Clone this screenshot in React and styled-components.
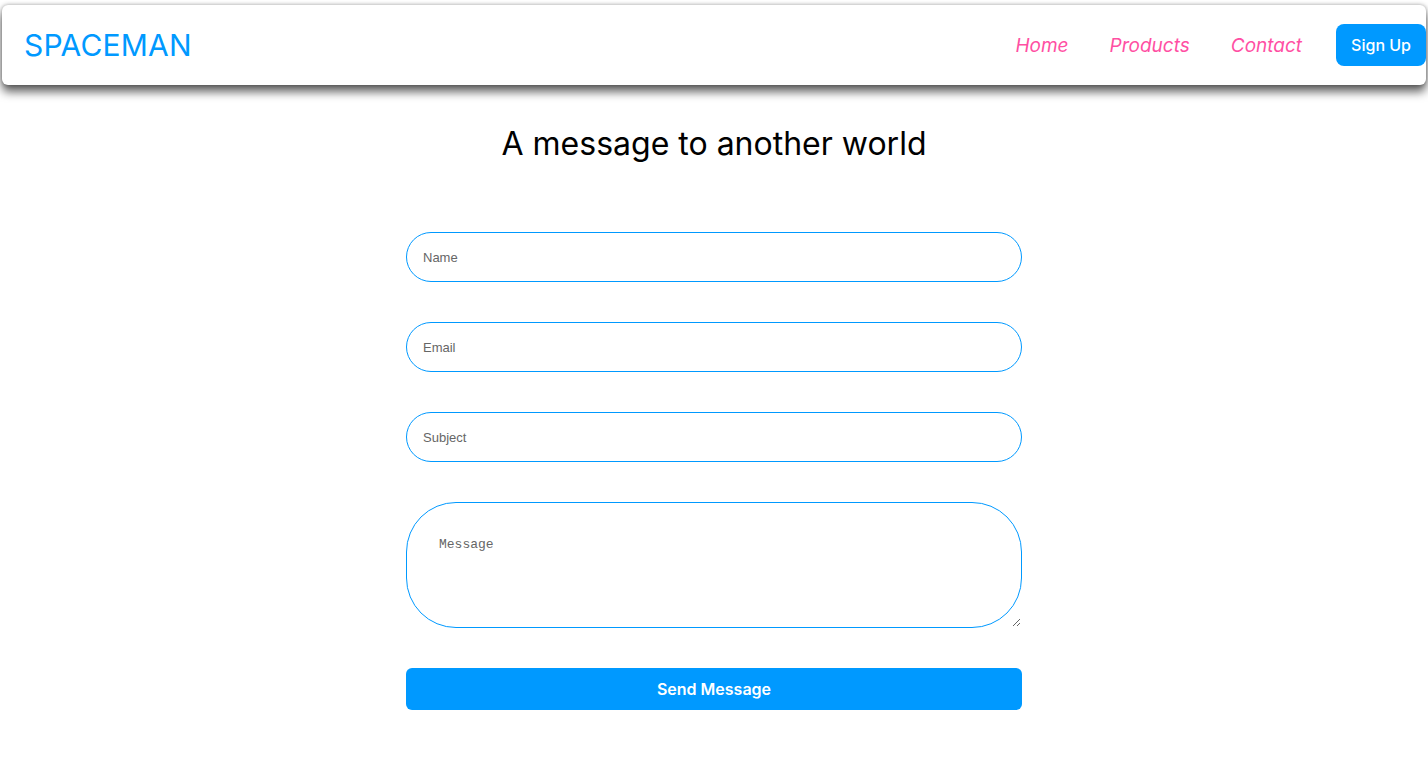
import React from 'react';
import styled, { createGlobalStyle } from 'styled-components';

const GlobalStyle = createGlobalStyle`
  body {
    margin: 0;
    background: #fff;
    font-family: Inter, "Noto Sans", sans-serif;
  }
  * {
    box-sizing: border-box;
  }
`;

const BLUE = '#0099ff';
const PINK = '#ff4fa3';

const Nav = styled.nav`
  display: flex;
  align-items: center;
  justify-content: space-between;
  height: 80px;
  margin: 5px 2px 0;
  padding: 0 0 0 21px;
  background: #fff;
  border-radius: 6px;
  box-shadow: 0 0 4px rgba(0, 0, 0, 0.35), 0 7px 10px rgba(0, 0, 0, 0.6);
`;

const Logo = styled.div`
  font-size: 30px;
  font-weight: 400;
  color: ${BLUE};
  letter-spacing: 0.2px;
  padding-left: 1px;
`;

const Links = styled.div`
  display: flex;
  align-items: center;
  gap: 41px;
`;

const NavLink = styled.a`
  font-size: 19px;
  font-style: italic;
  color: ${PINK};
  text-decoration: none;
`;

const SignUp = styled.button`
  height: 42px;
  padding: 0 15px;
  margin-left: -7px;
  border: none;
  border-radius: 8px;
  background: ${BLUE};
  color: #fff;
  font-family: inherit;
  font-size: 16px;
  font-weight: 500;
`;

const Main = styled.main`
  display: flex;
  flex-direction: column;
  align-items: center;
  padding-top: 39px;
`;

const Title = styled.h1`
  margin: 0 0 69px;
  font-size: 32px;
  font-weight: 400;
  color: #000;
`;

const Form = styled.form`
  display: flex;
  flex-direction: column;
  gap: 40px;
  width: 616px;
`;

const Field = styled.input`
  height: 50px;
  padding: 0 16px;
  border: 1px solid ${BLUE};
  border-radius: 25px;
  font-family: "Liberation Sans", Arial, sans-serif;
  font-size: 13px;
  outline: none;
  &::placeholder {
    color: #666;
  }
`;

const Message = styled.textarea`
  height: 126px;
  padding: 34px 32px;
  border: 1px solid ${BLUE};
  border-radius: 50px;
  font-family: "Liberation Mono", monospace;
  font-size: 13px;
  outline: none;
  &::placeholder {
    color: #666;
  }
`;

const Send = styled.button`
  height: 42px;
  border: none;
  border-radius: 6px;
  background: ${BLUE};
  color: #fff;
  font-family: inherit;
  font-size: 16px;
  font-weight: 600;
`;

export default function App() {
  return (
    <>
      <GlobalStyle />
      <Nav>
        <Logo>SPACEMAN</Logo>
        <Links>
          <NavLink href="#">Home</NavLink>
          <NavLink href="#">Products</NavLink>
          <NavLink href="#">Contact</NavLink>
          <SignUp>Sign Up</SignUp>
        </Links>
      </Nav>
      <Main>
        <Title>A message to another world</Title>
        <Form onSubmit={(e) => e.preventDefault()}>
          <Field placeholder="Name" />
          <Field placeholder="Email" />
          <Field placeholder="Subject" />
          <Message placeholder="Message" />
          <Send type="submit">Send Message</Send>
        </Form>
      </Main>
    </>
  );
}
